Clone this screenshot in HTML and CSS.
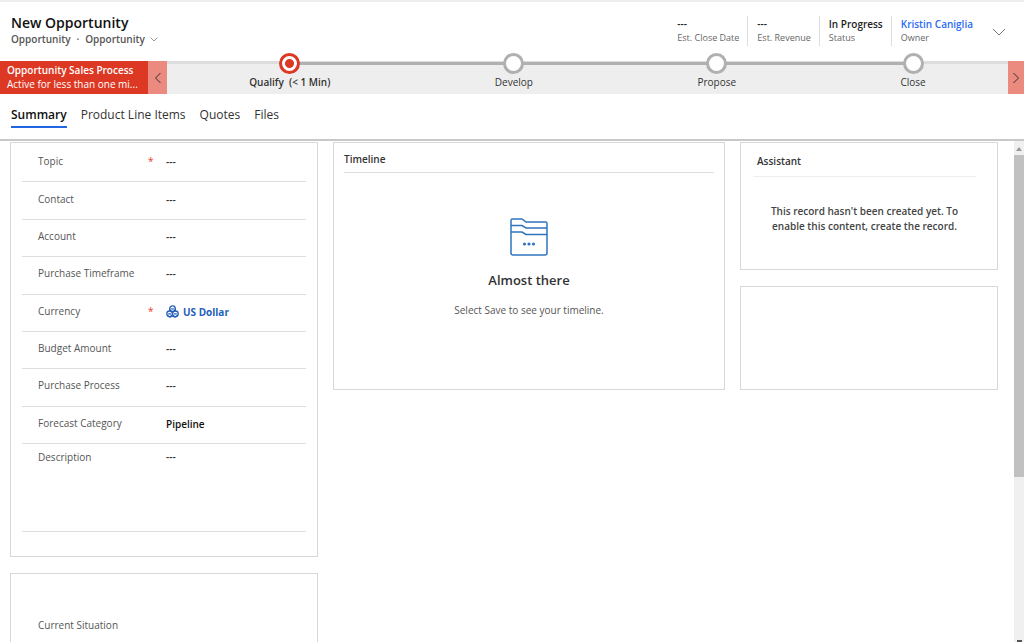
FILE: index.html
```html
<!DOCTYPE html>
<html lang="en">
<head>
<meta charset="utf-8">
<title>New Opportunity</title>
<link rel="stylesheet" href="styles.css">
</head>

<body>

<header class="header">
	<div class="heading">
		<h1>New Opportunity</h1>
		<div class="crumbs">
			<span>Opportunity</span>
			<span>·</span>
			<button class="formpicker">Opportunity
				<svg width="8" height="5" viewBox="0 0 8 5"><path d="M0.5 0.5 L4 4 L7.5 0.5"/></svg>
			</button>
		</div>
	</div>
	<dl class="facts">
		<div><dt>Est. Close Date</dt><dd>---</dd></div>
		<div><dt>Est. Revenue</dt><dd>---</dd></div>
		<div><dt>Status</dt><dd>In Progress</dd></div>
		<div><dt>Owner</dt><dd><a href="#owner">Kristin Caniglia</a></dd></div>
	</dl>
	<button class="expand" aria-label="Expand header">
		<svg width="14" height="8" viewBox="0 0 14 8"><path d="M1 1 L7 7 L13 1"/></svg>
	</button>
</header>

<section class="process">
	<div class="processname">
		<strong>Opportunity Sales Process</strong>
		<span>Active for less than one mi...</span>
	</div>
	<button class="arrow prev" aria-label="Previous stage">
		<svg width="6" height="12" viewBox="0 0 6 12"><path d="M5.5 1 L0.5 6 L5.5 11"/></svg>
	</button>
	<ol class="stages">
		<li class="stage current"><button><i class="dot"></i><span>Qualify &nbsp;(&lt; 1 Min)</span></button></li>
		<li class="stage"><button><i class="dot"></i><span>Develop</span></button></li>
		<li class="stage"><button><i class="dot"></i><span>Propose</span></button></li>
		<li class="stage"><button><i class="dot"></i><span>Close</span></button></li>
	</ol>
	<button class="arrow next" aria-label="Next stage">
		<svg width="6" height="12" viewBox="0 0 6 12"><path d="M0.5 1 L5.5 6 L0.5 11"/></svg>
	</button>
</section>

<nav class="tabs">
	<a class="active" href="#summary">Summary</a>
	<a href="#products">Product Line Items</a>
	<a href="#quotes">Quotes</a>
	<a href="#files">Files</a>
</nav>

<div class="work">
	<main class="columns">

		<div class="column">
			<form class="card details">
				<div class="fields">
					<div class="field">
						<label for="topic">Topic</label><span class="required">*</span>
						<input id="topic" type="text" value="---">
					</div>
					<div class="field">
						<label for="contact">Contact</label><span></span>
						<input id="contact" type="text" value="---">
					</div>
					<div class="field">
						<label for="account">Account</label><span></span>
						<input id="account" type="text" value="---">
					</div>
					<div class="field">
						<label for="timeframe">Purchase Timeframe</label><span></span>
						<select id="timeframe"><option>---</option></select>
					</div>
					<div class="field">
						<label for="currency">Currency</label><span class="required">*</span>
						<a class="lookup" id="currency" href="#currency">
							<svg width="13" height="13" viewBox="0 0 13 13">
								<circle cx="6.5" cy="3.7" r="2.8"/>
								<circle cx="3.6" cy="8.8" r="2.8"/>
								<circle cx="9.4" cy="8.8" r="2.8"/>
								<path d="M3.7 3.5 V6 M9.3 3.5 V6 M5.2 3.8 H7.8 M2.2 8.8 H5 M8 8.8 H10.8 M1 10 Q3.6 13.4 6.5 11 Q9.4 13.4 12 10"/>
							</svg>
							US Dollar
						</a>
					</div>
					<div class="field">
						<label for="budget">Budget Amount</label><span></span>
						<input id="budget" type="text" value="---">
					</div>
					<div class="field">
						<label for="purchase">Purchase Process</label><span></span>
						<select id="purchase"><option>---</option></select>
					</div>
					<div class="field">
						<label for="forecast">Forecast Category</label><span></span>
						<select id="forecast" class="filled"><option>Pipeline</option></select>
					</div>
				</div>
				<div class="field description">
					<label for="description">Description</label><span></span>
					<textarea id="description">---</textarea>
				</div>
			</form>

			<form class="card situation">
				<label for="situation">Current Situation</label>
				<textarea id="situation"></textarea>
			</form>
		</div>

		<div class="column">
			<section class="card timeline">
				<h2>Timeline</h2>
				<div class="empty">
					<svg width="38" height="38" viewBox="0 0 38 38">
						<path d="M1 36 V2.5 Q1 1 2.5 1 H12 L16 4 H35.5 Q37 4 37 5.5 V35 Q37 37 35 37 H3 Q1 37 1 35"/>
						<path d="M1 7.5 H12 L16 10 H37 M1 14 H12 L16 16.5 H37"/>
						<g class="dots"><circle cx="14.5" cy="26" r="1.6"/><circle cx="19" cy="26" r="1.6"/><circle cx="23.5" cy="26" r="1.6"/></g>
					</svg>
					<h3>Almost there</h3>
					<p>Select Save to see your timeline.</p>
				</div>
			</section>
		</div>

		<div class="column">
			<section class="card assistant">
				<h2>Assistant</h2>
				<p>This record hasn't been created yet. To enable this content, create the record.</p>
			</section>
			<section class="card blank"></section>
		</div>

	</main>

	<div class="scrollbar">
		<svg width="6" height="4" viewBox="0 0 6 4"><path d="M0 4 L3 0 L6 4 Z"/></svg>
		<div class="thumb"></div>
		<div class="corner"></div>
	</div>
</div>

</body>
</html>
```

FILE: styles.css
```css
* {
	box-sizing: border-box;
}

body {
	margin: 0;
	height: 100vh;
	overflow: hidden;
	display: flex;
	flex-direction: column;
	font-family: "Open Sans", "Noto Sans", sans-serif;
	font-size: 10px;
	line-height: 14px;
	color: #333;
	background: #fff;
}

h1, h2, h3, p, dl, dd, ol {
	margin: 0;
	padding: 0;
}

button, input, select, textarea {
	font: inherit;
	color: inherit;
	border: 0;
	padding: 0;
	margin: 0;
	background: transparent;
}

a {
	color: inherit;
	text-decoration: none;
}

svg {
	display: block;
	fill: none;
}

/* record header */
.header {
	display: flex;
	align-items: flex-start;
	height: 61px;
	padding: 12px 18px 0 11px;
	border-top: 2px solid #eee;
}

.heading {
	flex: 1;
}

h1 {
	font-size: 14px;
	line-height: 18px;
	font-weight: 600;
	color: #111;
}

.crumbs {
	display: flex;
	gap: 6px;
	font-weight: 600;
	color: #555;
}

.formpicker {
	display: flex;
	align-items: center;
	gap: 5px;
	font-weight: 600;
}

.formpicker svg {
	stroke: #999;
}

.facts {
	display: flex;
	padding-top: 2px;
}

.facts div {
	display: flex;
	flex-direction: column-reverse;
	height: 30px;
	justify-content: center;
	padding: 0 8px 0 9px;
	border-left: 1px solid #ddd;
}

.facts div:first-child {
	border-left: 0;
}

.facts dt {
	font-size: 9px;
	color: #666;
}

.facts dd {
	font-weight: 600;
	color: #222;
}

.facts a {
	color: #2b6bf3;
}

.expand {
	padding: 14px 0 0 11px;
}

.expand svg {
	stroke: #777;
}

/* business process bar */
.process {
	display: flex;
	height: 33px;
	background: #eee;
}

.processname {
	width: 148px;
	padding: 2px 0 0 7px;
	color: #fff;
	background: #dc3824;
	white-space: nowrap;
}

.processname strong,
.processname span {
	display: block;
	font-weight: 600;
}

.processname span {
	font-weight: 400;
}

.arrow {
	width: 19px;
	display: flex;
	align-items: center;
	justify-content: center;
	background: #eb8a7e;
}

.arrow svg {
	stroke: #333;
}

.next {
	width: 16px;
}

.stages {
	flex: 1;
	position: relative;
	display: flex;
	justify-content: space-around;
	list-style: none;
	border-top: 3px solid #ddd;
}

/* line joining the first stage to the last */
.stages::before {
	content: "";
	position: absolute;
	top: -2px;
	left: 15%;
	right: 12%;
	height: 3px;
	background: #b0b0b0;
}

.stage {
	position: relative;
	margin-top: -11px;
}

.stage button {
	display: flex;
	flex-direction: column;
	align-items: center;
}

.dot {
	width: 21px;
	height: 21px;
	margin-bottom: 1px;
	border: 3px solid #b0b0b0;
	border-radius: 50%;
	background: #fff;
}

.current .dot {
	border-color: #dc3824;
	background: radial-gradient(circle, #dc3824 4px, #fff 5px);
}

.current button {
	font-weight: 600;
}

/* tabs */
.tabs {
	display: flex;
	gap: 14px;
	height: 47px;
	padding: 12px 11px 0;
	font-size: 12px;
	line-height: 18px;
	border-bottom: 2px solid #c8c8c8;
}

.tabs a {
	height: 22px;
}

.tabs .active {
	font-weight: 600;
	color: #111;
	border-bottom: 2px solid #2266e3;
}

/* form body */
.work {
	flex: 1;
	min-height: 0;
	display: flex;
}

.columns {
	flex: 1;
	min-height: 0;
	display: grid;
	grid-template-columns: 308fr 392fr 258fr;
	gap: 15px;
	align-items: start;
	padding: 1px 16px 0 10px;
	overflow: hidden;
}

.column {
	display: flex;
	flex-direction: column;
	gap: 16px;
}

.card {
	border: 1px solid #d8d8d8;
}

.details {
	padding: 2px 11px 24px;
}

.fields {
	display: grid;
	grid-auto-rows: 1fr;
	height: 299px;
}

.field {
	display: grid;
	grid-template-columns: 110px 18px 1fr;
	align-items: center;
	padding-left: 16px;
	border-bottom: 1px solid #ddd;
}

.field label {
	padding-bottom: 4px;
	color: #555;
}

.field input,
.field select,
.field textarea {
	width: 100%;
	height: 16px;
	padding-bottom: 2px;
	appearance: none;
	resize: none;
	font-weight: 600;
}

.field .filled {
	color: #111;
}

.required {
	padding-bottom: 4px;
	color: #e8392c;
}

.lookup {
	display: flex;
	align-items: center;
	gap: 4px;
	padding-bottom: 2px;
	font-weight: 700;
	color: #2560b8;
}

.lookup svg {
	stroke: #2560b8;
	stroke-width: 1.3;
}

.description {
	height: 88px;
	align-items: start;
	padding-top: 6px;
}

.situation {
	padding: 44px 27px 20px;
	color: #555;
}

.situation label {
	display: block;
}

.situation textarea {
	width: 100%;
	height: 80px;
}

h2 {
	font-size: 10px;
	line-height: 14px;
	font-weight: 600;
}

.timeline {
	height: 248px;
	padding: 9px 10px 0;
}

.timeline h2 {
	padding-bottom: 6px;
	border-bottom: 1px solid #ddd;
}

.empty {
	display: flex;
	flex-direction: column;
	align-items: center;
	padding-top: 45px;
	color: #555;
}

.empty svg {
	stroke: #2f75bd;
	stroke-width: 1.5;
}

.empty .dots {
	fill: #2f75bd;
	stroke: none;
}

h3 {
	padding: 15px 0 14px;
	font-size: 13px;
	line-height: 18px;
	font-weight: 600;
	color: #333;
}

.assistant {
	height: 128px;
	padding: 11px 21px 0 12px;
}

.assistant h2 {
	padding: 0 4px 8px;
	border-bottom: 1px solid #eee;
}

.assistant p {
	padding: 27px 16px 0;
	font-weight: 600;
	line-height: 15px;
	text-align: center;
	color: #444;
}

.blank {
	height: 104px;
}

/* scroll track */
.scrollbar {
	width: 10px;
	display: flex;
	flex-direction: column;
	align-items: center;
	padding-top: 6px;
	background: #f0f0f0;
}

.scrollbar svg {
	fill: #999;
}

.thumb {
	width: 100%;
	height: 65%;
	margin-top: 4px;
	background: #c1c1c1;
}

.corner {
	width: 5px;
	height: 2px;
	margin-top: auto;
	background: #555;
}
```
